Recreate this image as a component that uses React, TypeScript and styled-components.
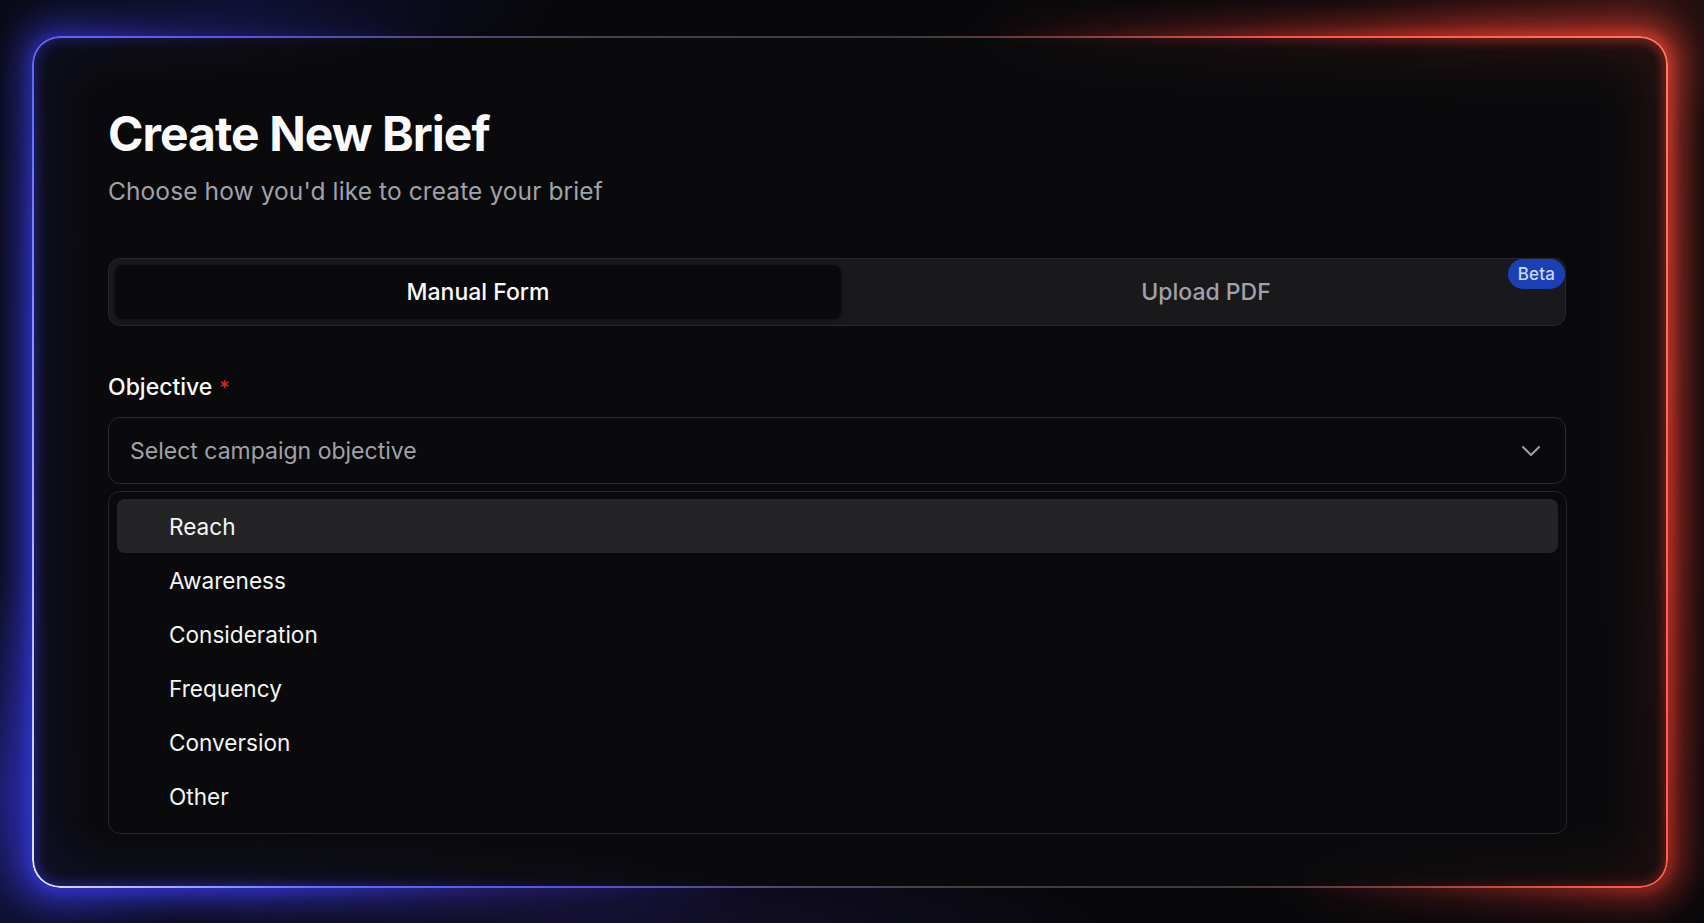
import React from "react";
import styled, { createGlobalStyle } from "styled-components";
import { ChevronDown } from "lucide-react";

const GlobalStyle = createGlobalStyle`
  * { box-sizing: border-box; }
  html, body { margin: 0; padding: 0; }
  body {
    background-color: #08080b;
    background-image:
      radial-gradient(300px 320px at 0% 86%, rgba(60, 60, 255, 0.35), transparent 70%),
      radial-gradient(460px 130px at 14% 0%, rgba(40, 50, 200, 0.18), transparent 70%),
      radial-gradient(420px 180px at 96% 0%, rgba(255, 70, 50, 0.14), transparent 70%),
      radial-gradient(700px 110px at 36% 100%, rgba(70, 50, 200, 0.18), transparent 70%);
    font-family: Inter, "Noto Sans", "Liberation Sans", sans-serif;
    color: #fafafa;
    overflow: hidden;
  }
`;

const ringGradient = `linear-gradient(70deg,
  #e4e5ff 0%, #a4a9ff 7%, #6268ff 15%, #5a54ea 26%,
  rgba(112, 104, 180, 0.7) 36%, rgba(118, 118, 130, 0.5) 48%, rgba(118, 118, 130, 0.45) 60%,
  rgba(190, 95, 95, 0.6) 69%, #ff5646 81%, #ff6652 91%, #ff7a5f 100%)`;

const glowGradient = `linear-gradient(70deg,
  #3d40ff 0%, #3a3ff8 12%, rgba(70, 60, 230, 0.45) 24%, rgba(60, 50, 180, 0) 38%,
  rgba(220, 60, 50, 0) 64%, rgba(235, 60, 50, 0.45) 76%, #ff3e30 90%, #ff4a36 100%)`;

const Page = styled.div`
  width: 1704px;
  height: 923px;
  padding: 36px 36px 35px 32px;
`;

const Card = styled.section`
  position: relative;
  width: 1636px;
  height: 852px;
`;

const OuterGlow = styled.div`
  position: absolute;
  inset: -16px;
  border-radius: 40px;
  background: ${glowGradient};
  filter: blur(16px);
  opacity: 0.55;
  pointer-events: none;
  z-index: 0;
`;

const GlowLayer = styled.div<{ $spread: number; $blur: number; $opacity: number }>`
  position: absolute;
  inset: ${(p) => -p.$spread}px;
  filter: blur(${(p) => p.$blur}px);
  opacity: ${(p) => p.$opacity};
  pointer-events: none;
  z-index: 2;
`;

const Ring = styled.div<{ $spread: number; $width: number }>`
  position: absolute;
  inset: ${(p) => p.$spread - p.$width / 2}px;
  border-radius: ${(p) => 28 + p.$width / 2}px;
  padding: ${(p) => p.$width}px;
  background: ${glowGradient};
  -webkit-mask: linear-gradient(#000 0 0) content-box, linear-gradient(#000 0 0);
  -webkit-mask-composite: xor;
  mask-composite: exclude;
`;

const Edge = styled.div`
  position: absolute;
  inset: 0;
  border-radius: 28px;
  padding: 2px;
  background: ${ringGradient};
  -webkit-mask: linear-gradient(#000 0 0) content-box, linear-gradient(#000 0 0);
  -webkit-mask-composite: xor;
  mask-composite: exclude;
  pointer-events: none;
  z-index: 3;
`;

const Panel = styled.div`
  position: relative;
  z-index: 1;
  height: 100%;
  width: 100%;
  border-radius: 28px;
  background: #0a0a0c;
  padding: 74px 0 0 76px;
  display: flex;
  flex-direction: column;
`;

const Content = styled.div`
  width: 1458px;
  display: flex;
  flex-direction: column;
`;

const Title = styled.h1`
  margin: 0;
  font-size: 48px;
  line-height: 1;
  font-weight: 700;
  letter-spacing: -0.02em;
  color: #fafafa;
`;

const Subtitle = styled.p`
  margin: 17px 0 0;
  font-size: 24.5px;
  line-height: 32px;
  letter-spacing: 0.1px;
  color: #a1a1aa;
`;

const TabList = styled.div`
  position: relative;
  margin-top: 51px;
  height: 68px;
  display: flex;
  padding: 6px;
  border: 1px solid #26262b;
  border-radius: 12px;
  background: #19191c;
`;

const Tab = styled.button<{ $active?: boolean }>`
  flex: ${(p) => (p.$active ? "0 0 726px" : "1")};
  height: 54px;
  border: 0;
  border-radius: 8px;
  padding: ${(p) => (p.$active ? "0" : "0 0 0 12px")};
  font-family: inherit;
  font-size: 23px;
  font-weight: 500;
  cursor: pointer;
  color: ${(p) => (p.$active ? "#fafafa" : "#a1a1aa")};
  background: ${(p) => (p.$active ? "#0a0a0c" : "transparent")};
  box-shadow: ${(p) => (p.$active ? "0 1px 3px rgba(0,0,0,0.4)" : "none")};
`;

const Badge = styled.span`
  position: absolute;
  top: 0;
  right: 0;
  height: 30px;
  padding: 0 10px;
  display: flex;
  align-items: center;
  border-radius: 999px;
  background: #1d3fb6;
  color: #c7dbff;
  font-size: 17px;
  font-weight: 500;
  letter-spacing: 0.01em;
`;

const Label = styled.label`
  margin-top: 45px;
  font-size: 23px;
  line-height: 32px;
  font-weight: 500;
  color: #fafafa;
`;

const Required = styled.span`
  color: #dc2626;
  margin-left: 7px;
  font-size: 20px;
`;

const Select = styled.div`
  margin-top: 13px;
  height: 67px;
  display: flex;
  align-items: center;
  justify-content: space-between;
  padding: 0 18px 0 21px;
  border: 1px solid #2a2a2f;
  border-radius: 12px;
  background: #0a0a0c;
`;

const Placeholder = styled.span`
  font-size: 23px;
  color: #a1a1aa;
`;

const List = styled.ul`
  list-style: none;
  margin: 7px 0 0;
  padding: 7px 8px 10px;
  width: 1459px;
  border: 1px solid #27272b;
  border-radius: 12px;
  background: #0a0a0c;
`;

const Option = styled.li<{ $highlighted?: boolean }>`
  height: 54px;
  display: flex;
  align-items: center;
  padding-left: 52px;
  border-radius: 8px;
  font-size: 22.6px;
  color: #f4f4f5;
  background: ${(p) => (p.$highlighted ? "#242427" : "transparent")};
`;

const options = ["Reach", "Awareness", "Consideration", "Frequency", "Conversion", "Other"];

export default function App() {
  return (
    <>
      <GlobalStyle />
      <Page>
        <Card>
          <OuterGlow />
          <Panel>
            <Content>
              <Title>Create New Brief</Title>
              <Subtitle>Choose how you'd like to create your brief</Subtitle>
              <TabList>
                <Tab $active>Manual Form</Tab>
                <Tab>Upload PDF</Tab>
                <Badge>Beta</Badge>
              </TabList>
              <Label>
                Objective<Required>*</Required>
              </Label>
              <Select>
                <Placeholder>Select campaign objective</Placeholder>
                <ChevronDown size={32} strokeWidth={1.5} color="#9f9fa6" />
              </Select>
              <List>
                {options.map((o, i) => (
                  <Option key={o} $highlighted={i === 0}>
                    {o}
                  </Option>
                ))}
              </List>
            </Content>
          </Panel>
          <GlowLayer $spread={60} $blur={26} $opacity={0.4}>
            <Ring $spread={60} $width={14} />
          </GlowLayer>
          <GlowLayer $spread={20} $blur={6} $opacity={0.85}>
            <Ring $spread={20} $width={5} />
          </GlowLayer>
          <Edge />
        </Card>
      </Page>
    </>
  );
}
